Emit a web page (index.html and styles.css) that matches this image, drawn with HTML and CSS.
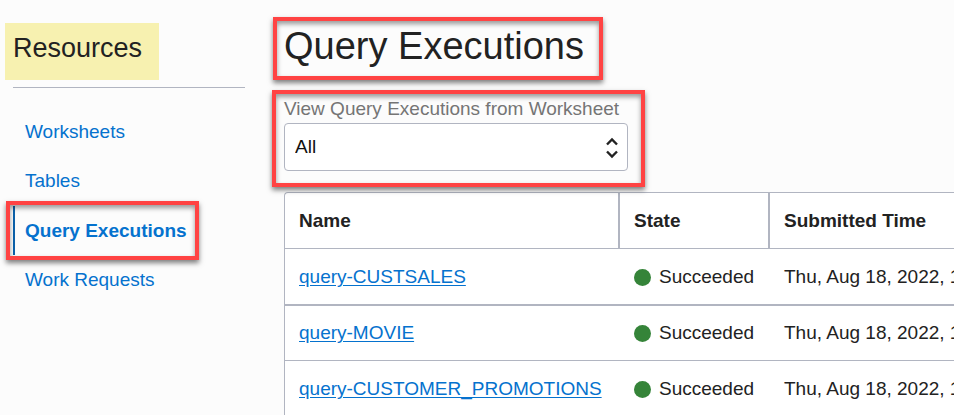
FILE: index.html
```html
<!DOCTYPE html>
<html lang="en">
<head>
<meta charset="utf-8">
<title>Query Executions</title>
<link rel="stylesheet" href="styles.css">
</head>
<body>
<div class="page">
  <aside class="sidebar">
    <h2 class="sidebar-title">Resources</h2>
    <nav class="nav">
      <a class="nav-link" href="#">Worksheets</a>
      <a class="nav-link" href="#">Tables</a>
      <a class="nav-link active marked" href="#" aria-current="page">Query Executions</a>
      <a class="nav-link" href="#">Work Requests</a>
    </nav>
  </aside>
  <main class="content">
    <h1 class="title marked">Query Executions</h1>
    <div class="filter marked">
      <label class="filter-label" for="worksheet">View Query Executions from Worksheet</label>
      <div class="select-wrap">
        <select class="select" id="worksheet"><option>All</option></select>
        <svg class="select-icon" width="14" height="22" viewBox="0 0 14 22" aria-hidden="true">
          <path d="M2 7.5 7 2.5l5 5M2 14.5l5 5 5-5"/>
        </svg>
      </div>
    </div>
    <table class="table">
      <thead>
        <tr><th class="col-name">Name</th><th class="col-state">State</th><th>Submitted Time</th></tr>
      </thead>
      <tbody>
        <tr><td><a href="#">query-CUSTSALES</a></td><td><span class="state">Succeeded</span></td><td>Thu, Aug 18, 2022, 1</td></tr>
        <tr><td><a href="#">query-MOVIE</a></td><td><span class="state">Succeeded</span></td><td>Thu, Aug 18, 2022, 1</td></tr>
        <tr><td><a href="#">query-CUSTOMER_PROMOTIONS</a></td><td><span class="state">Succeeded</span></td><td>Thu, Aug 18, 2022, 1</td></tr>
      </tbody>
    </table>
  </main>
</div>
</body>
</html>
```
FILE: styles.css
```css
* {
  box-sizing: border-box;
}

body {
  margin: 0;
  overflow: hidden;
  background: #fcfcfc;
  color: #222;
  font: 19px/24px "Liberation Sans", Arial, sans-serif;
}

a {
  color: #0572ce;
}

.page {
  display: flex;
  gap: 39px;
}

.sidebar {
  flex: none;
  width: 245px;
  padding-top: 23px;
}

.sidebar-title {
  width: fit-content;
  margin: 0 0 7px 5px;
  padding: 9px 17px 16px 8px;
  background: #f7f1b0;
  font-size: 27px;
  font-weight: 400;
  line-height: 32px;
}

.nav {
  display: flex;
  flex-direction: column;
  align-items: flex-start;
  margin-left: 13px;
  padding-top: 19px;
  border-top: 1px solid #b1b5c1;
}

.nav-link {
  padding: 13px 0 12px 10px;
  border-left: 2px solid transparent;
  text-decoration: none;
}

.nav-link.active {
  margin-top: 1px;
  border-left-color: #0b62ac;
  font-weight: 700;
}

/* Red callout frames drawn around highlighted parts */
.marked {
  position: relative;
}

.marked::after {
  content: "";
  position: absolute;
  z-index: 1;
  border: 4px solid #ff4343;
  box-shadow: 0 3px 5px rgba(0, 0, 0, 0.5), inset 0 3px 5px rgba(0, 0, 0, 0.4);
  pointer-events: none;
}

.nav-link.marked::after {
  inset: -5px -12px -5px -9px;
}

.title.marked::after {
  inset: -5px -19px -9px -11px;
}

.filter.marked::after {
  inset: -7px -17px -16px -12px;
}

.content {
  flex: 1;
  min-width: 0;
  padding-top: 22px;
}

.title {
  width: fit-content;
  margin: 0 0 26px;
  font-size: 38px;
  font-weight: 400;
  line-height: 49px;
}

.filter {
  width: fit-content;
}

.filter-label {
  display: block;
  margin-bottom: 2px;
  color: #757575;
}

.select-wrap {
  position: relative;
  width: 344px;
}

.select {
  display: block;
  width: 100%;
  height: 48px;
  padding: 0 40px 0 10px;
  appearance: none;
  border: 1px solid #b1b5c1;
  border-radius: 4px;
  background: #fff;
  color: #111;
  font: inherit;
}

.select-icon {
  position: absolute;
  top: 14px;
  right: 9px;
  fill: none;
  stroke: #222;
  stroke-width: 2.4;
  pointer-events: none;
}

.table {
  width: 100%;
  margin-top: 21px;
  border: solid #b1b5c1;
  border-width: 1px 0 0 1px;
  border-radius: 4px 0 0;
  border-spacing: 0;
  background: #fff;
  white-space: nowrap;
}

th,
td {
  padding: 16px 0 15px 14px;
  border-bottom: 1px solid #b1b5c1;
  text-align: left;
}

tbody tr:first-child td {
  border-bottom-width: 2px;
}

tbody tr:nth-child(2) td {
  padding-top: 15px;
}

th + th {
  border-left: 2px solid #b1b5c1;
}

td + td {
  padding-left: 16px;
}

.col-name {
  width: 333px;
  min-width: 333px;
}

.col-state {
  width: 150px;
  min-width: 150px;
}

.table a {
  text-underline-offset: 2px;
}

.state {
  display: flex;
  align-items: center;
  gap: 8px;
}

.state::before {
  content: "";
  width: 17px;
  height: 17px;
  border-radius: 50%;
  background: #358439;
}
```
